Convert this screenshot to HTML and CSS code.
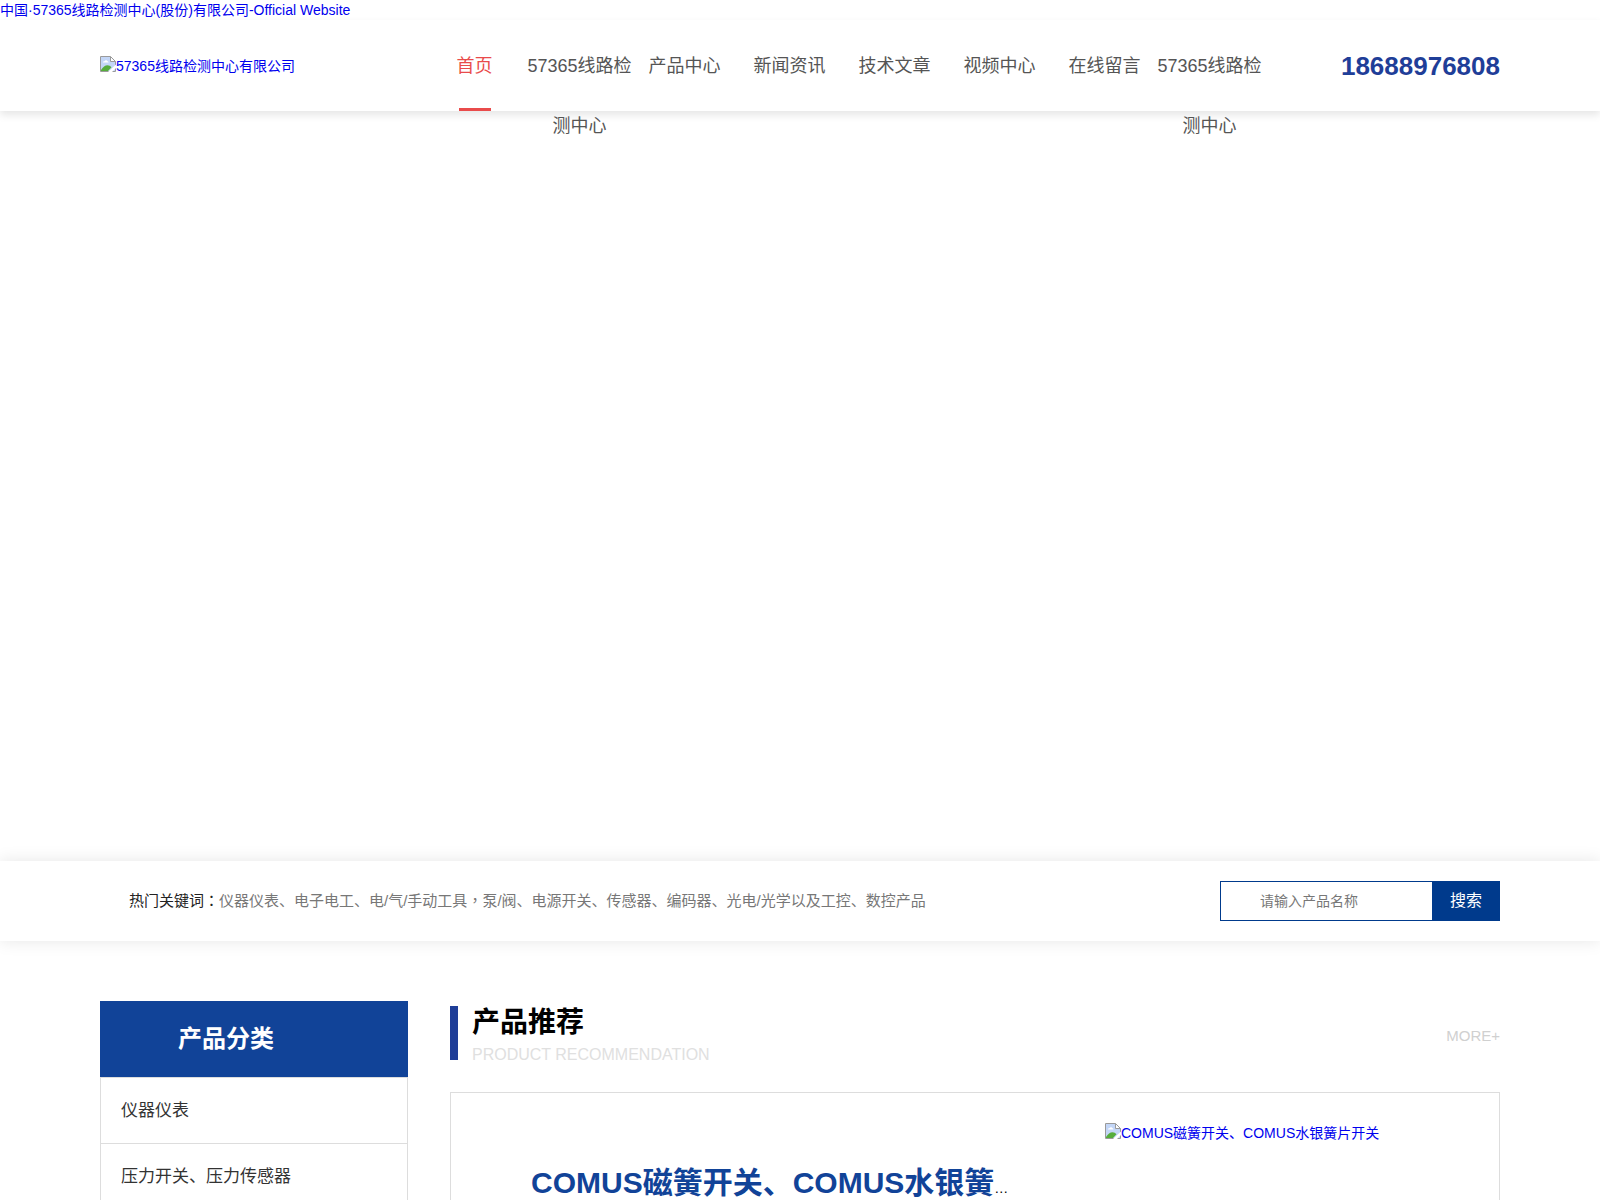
FILE: index.html
```html
<!DOCTYPE html>
<html lang="zh-CN">
<head>
<meta charset="utf-8">
<title>57365线路检测中心有限公司</title>
<link rel="stylesheet" href="styles.css">
</head>
<body>
<svg class="symbols" aria-hidden="true">
  <symbol id="picture" viewBox="0 0 16 16">
    <path d="M1 1h9.500L15 5.500V15H1z" fill="#c3d6f7"/>
    <path d="M3 6.500c0-1 .8-1.500 1.500-1.300C5 4 7 4 7.300 5.300c.9 0 1.200.6 1.200 1.200z" fill="#fff"/>
    <path d="M1 15v-1c2-3 4-4.800 6.500-4.800 1.500 0 3 .8 4 2L8 15z" fill="#56ad3c"/>
    <path d="M10.500 1v4.500H15z" fill="#fff"/>
    <path d="M.5 .5H10.500L15.500 5.500V15.500H.5zM10.500 .5v5h5" fill="none" stroke="#9a9a9a"/>
    <path d="M8 16L16 8.500V12l-4 4z" fill="#fff"/>
  </symbol>
</svg>
<a class="site-link" href="#">中国·57365线路检测中心(股份)有限公司-Official Website</a>
<header class="header">
  <div class="wrap header-row">
    <a class="logo" href="#"><svg class="picture" aria-hidden="true"><use href="#picture"/></svg>57365线路检测中心有限公司</a>
    <nav class="nav">
      <a class="active" href="#">首页</a>
      <a href="#">57365线路检测中心</a>
      <a href="#">产品中心</a>
      <a href="#">新闻资讯</a>
      <a href="#">技术文章</a>
      <a href="#">视频中心</a>
      <a href="#">在线留言</a>
      <a href="#">57365线路检测中心</a>
    </nav>
    <strong class="phone">18688976808</strong>
  </div>
</header>
<div class="banner"></div>
<section class="search-bar">
  <div class="wrap search-row">
    <p class="keywords"><b>热门关键词<span class="mark" lang="zh-TW">：</span></b>仪器仪表、电子电工、电/气/手动工具<span class="mark" lang="zh-TW">，</span>泵/阀、电源开关、传感器、编码器、光电/光学以及工控、数控产品</p>
    <form class="search">
      <input type="text" placeholder="请输入产品名称" aria-label="请输入产品名称">
      <button type="button">搜索</button>
    </form>
  </div>
</section>
<main class="wrap main">
  <aside class="side">
    <h2>产品分类</h2>
    <ul>
      <li><a href="#">仪器仪表</a></li>
      <li><a href="#">压力开关、压力传感器</a></li>
    </ul>
  </aside>
  <section class="products">
    <div class="heading">
      <div class="heading-text">
        <h2>产品推荐</h2>
        <p>PRODUCT RECOMMENDATION</p>
      </div>
      <a class="more" href="#">MORE+</a>
    </div>
    <article class="card">
      <h3><a href="#">COMUS磁簧开关、COMUS水银簧</a>…</h3>
      <a class="card-image" href="#"><svg class="picture" aria-hidden="true"><use href="#picture"/></svg>COMUS磁簧开关、COMUS水银簧片开关</a>
    </article>
  </section>
</main>
</body>
</html>
```
FILE: styles.css
```css
* {
  box-sizing: border-box;
  margin: 0;
  padding: 0;
}

body {
  background: #fff;
  color: #000;
  font: 14px/20px "Liberation Sans", "Noto Sans CJK SC", sans-serif;
}

a {
  text-decoration: none;
}

ul {
  list-style: none;
}

.symbols {
  display: none;
}

.picture {
  width: 16px;
  height: 16px;
  flex: none;
}

.wrap {
  max-width: 1400px;
  margin: 0 auto;
}

.site-link,
.logo,
.card-image {
  color: #0000ee;
}

.site-link {
  display: block;
}

.header {
  height: 91px;
  box-shadow: 0 4px 8px rgba(0, 0, 0, 0.1);
}

.header-row {
  display: flex;
  align-items: flex-start;
  padding-top: 16px;
}

.logo {
  display: flex;
  width: 322px;
  padding-top: 20px;
}

.nav {
  display: flex;
  width: 840px;
}

.nav a {
  flex: 1;
  height: 75px;
  color: #555;
  font-size: 18px;
  line-height: 60px;
  text-align: center;
}

.nav .active {
  color: #e94b4b;
}

.nav .active::after {
  content: "";
  display: block;
  width: 32px;
  height: 3px;
  margin: 12px auto 0;
  background: #e94b4b;
}

.phone {
  margin-left: auto;
  color: #1f3e98;
  font-size: 26px;
  line-height: 60px;
}

.banner {
  height: 750px;
}

.search-bar {
  padding: 20px 0;
  box-shadow: 0 0 16px rgba(0, 0, 0, 0.1);
}

.search-row {
  display: flex;
  align-items: center;
  justify-content: space-between;
  padding-left: 29px;
}

.keywords {
  color: #777;
  font-size: 15px;
}

.keywords b {
  color: #222;
  font-weight: 400;
}

.mark {
  font-family: "Noto Sans CJK TC", sans-serif;
  line-height: 1;
}

.search {
  display: flex;
  width: 280px;
  height: 40px;
}

.search input {
  flex: 1;
  min-width: 0;
  padding-left: 39px;
  border: 1px solid #003a8c;
  border-right: 0;
  font: inherit;
}

.search input::placeholder {
  color: #777;
}

.search button {
  width: 68px;
  border: 0;
  background: #003a8c;
  color: #fff;
  font: inherit;
  font-size: 16px;
}

.main {
  display: grid;
  grid-template-columns: 308px 1fr;
  gap: 42px;
  padding-top: 60px;
}

.side h2 {
  padding-left: 78px;
  background: #114398;
  color: #fff;
  font-size: 24px;
  line-height: 76px;
}

.side ul {
  border: 1px solid #ddd;
  border-bottom: 0;
}

.side li {
  border-bottom: 1px solid #ddd;
}

.side li a {
  display: block;
  padding-left: 20px;
  color: #333;
  font-size: 17px;
  line-height: 65px;
}

.heading {
  display: flex;
  align-items: flex-start;
  justify-content: space-between;
  padding: 5px 0 26px;
}

.heading-text {
  height: 54px;
  padding-left: 14px;
  border-left: 8px solid #1f3e98;
}

.heading h2 {
  font-size: 28px;
  line-height: 34px;
}

.heading p {
  color: #e0e0e0;
  font-size: 16px;
  line-height: 30px;
}

.more {
  color: #d0d0d0;
  font-size: 15px;
  line-height: 60px;
}

.card {
  display: grid;
  grid-template-columns: 480px 1fr;
  column-gap: 94px;
  padding: 30px 30px 0 80px;
  border: 1px solid #ddd;
  border-bottom: 0;
}

.card h3 {
  padding-top: 30px;
  font-size: 14px;
  font-weight: 400;
  line-height: 60px;
  white-space: nowrap;
}

.card h3 a {
  color: #114398;
  font-size: 30px;
  font-weight: 700;
}

.card-image {
  display: flex;
}
```
